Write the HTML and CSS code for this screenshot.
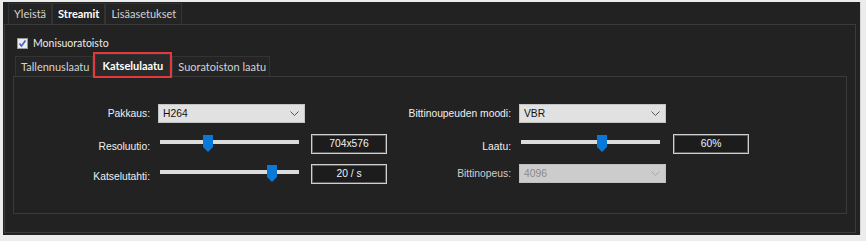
FILE: index.html
```html
<!DOCTYPE html>
<html lang="fi">
<head>
  <meta charset="UTF-8" />
  <title>Streamit</title>
  <link rel="stylesheet" href="styles.css">
</head>
<body>

  <div class="window">
    <!-- Top tabs -->
    <div class="tabs top-tabs">
      <div class="tab">Yleistä</div>
      <div class="tab active">Streamit</div>
      <div class="tab">Lisäasetukset</div>
    </div>

    <div class="panel">
      <label class="check">
        <svg width="11" height="11" viewBox="0 0 11 11">
          <rect x="0.5" y="0.5" width="10" height="10" fill="#ececec" stroke="#9a9a9a"/>
          <polyline points="2.5,5.5 4.5,8 8.5,2.5" fill="none" stroke="#3d5fd8" stroke-width="1.6"/>
        </svg>
        Monisuoratoisto
      </label>

      <!-- Sub tabs -->
      <div class="tabs sub-tabs">
        <div class="tab">Tallennuslaatu</div>
        <div class="tab active marked">Katselulaatu</div>
        <div class="tab">Suoratoiston laatu</div>
      </div>

      <div class="subpanel">
        <div class="form-grid">
          <div class="label">Pakkaus:</div>
          <div class="select">
            <span>H264</span>
            <svg class="chevron" width="9" height="5" viewBox="0 0 9 5"><polyline points="0.5,0.5 4.5,4.5 8.5,0.5" fill="none" stroke="#555" /></svg>
          </div>
          <div></div>
          <div class="label">Bittinoupeuden moodi:</div>
          <div class="select">
            <span>VBR</span>
            <svg class="chevron" width="9" height="5" viewBox="0 0 9 5"><polyline points="0.5,0.5 4.5,4.5 8.5,0.5" fill="none" stroke="#555" /></svg>
          </div>
          <div></div>

          <div class="label low">Resoluutio:</div>
          <div class="slider">
            <div class="track"></div>
            <svg class="thumb" style="left: 43px" width="10" height="17" viewBox="0 0 10 17"><polygon points="0,0 10,0 10,12 5,17 0,12" fill="#0a78d6"/></svg>
          </div>
          <div class="value">704x576</div>
          <div class="label low">Laatu:</div>
          <div class="slider">
            <div class="track"></div>
            <svg class="thumb" style="left: 76px" width="10" height="17" viewBox="0 0 10 17"><polygon points="0,0 10,0 10,12 5,17 0,12" fill="#0a78d6"/></svg>
          </div>
          <div class="value">60%</div>

          <div class="label low">Katselutahti:</div>
          <div class="slider">
            <div class="track"></div>
            <svg class="thumb" style="left: 107px" width="10" height="17" viewBox="0 0 10 17"><polygon points="0,0 10,0 10,12 5,17 0,12" fill="#0a78d6"/></svg>
          </div>
          <div class="value">20 / s</div>
          <div class="label dim">Bittinopeus:</div>
          <div class="select disabled">
            <span>4096</span>
            <svg class="chevron" width="9" height="5" viewBox="0 0 9 5"><polyline points="0.5,0.5 4.5,4.5 8.5,0.5" fill="none" stroke="#a8a8a8" /></svg>
          </div>
          <div></div>
        </div>
      </div>
    </div>
  </div>

</body>
</html>
```

FILE: styles.css
```css
body {
  margin: 0;
  background: #ececec;
  font-family: Lato, "Noto Sans", sans-serif;
  font-size: 11px;
  color: #e6e6e6;
}

.window {
  margin: 2px 0 0 3px;
  width: 858px;
  height: 233px;
  background: #222222;
  border-right: 1px solid #d8d8d8;
  box-sizing: border-box;
}

.tabs {
  display: flex;
}

.top-tabs {
  height: 22px;
  padding-left: 5px;
  align-items: flex-end;
}

.tab {
  height: 20px;
  line-height: 20px;
  padding: 0 5px;
  border: 1px solid #333;
  border-bottom: none;
  background: #242424;
  color: #d4d4d4;
  white-space: nowrap;
}

.tab.active {
  font-weight: bold;
  color: #ffffff;
  background: #222;
}

.panel {
  margin-left: 1px;
  width: 852px;
  height: 209px;
  box-sizing: border-box;
  border: 1px solid #3a3a3a;
  padding: 10px 8px 0 8px;
}

.check {
  display: flex;
  align-items: center;
  gap: 5px;
  height: 16px;
  padding-left: 4px;
  color: #ececec;
  font-size: 10.5px;
}

.sub-tabs {
  margin-top: 5px;
  height: 20px;
  padding-left: 2px;
  align-items: flex-end;
}

.sub-tabs .tab {
  height: 19px;
  line-height: 19px;
  padding: 0 3px 0 5px;
}

.sub-tabs .tab.marked {
  height: 21px;
  line-height: 21px;
  margin: 0 2px;
  padding: 0 6px;
  background: #2a2a2a;
  outline: 2px solid #e3393c;
  outline-offset: 0;
}

.subpanel {
  height: 138px;
  box-sizing: border-box;
  border: 1px solid #3a3a3a;
  padding-top: 27px;
}

.form-grid {
  display: grid;
  grid-template-columns: 144px 153px 76px 132px 154px 76px;
  grid-template-rows: 20px 20px 20px;
  row-gap: 10px;
  font-family: "Liberation Sans", Arial, sans-serif;
  font-size: 10.3px;
}

.label {
  text-align: right;
  padding-right: 8px;
  line-height: 20px;
  color: #f0f0f0;
}

.label.low {
  padding-top: 3px;
}

.label.dim {
  color: #cfcfcf;
}

.select {
  width: 147px;
  height: 19px;
  box-sizing: border-box;
  display: flex;
  align-items: center;
  justify-content: space-between;
  padding: 0 5px 0 4px;
  background: #e1e1e1;
  border: 1px solid #c4c4c4;
  color: #111;
}

.select.disabled {
  background: #cccccc;
  border-color: #c0c0c0;
  color: #8a8a8a;
}

.slider {
  position: relative;
  width: 139px;
  margin-left: 2px;
}

.track {
  margin-top: 6px;
  height: 4px;
  background: #dcdcdc;
}

.thumb {
  position: absolute;
  top: 1px;
}

.value {
  height: 20px;
  box-sizing: border-box;
  border: 1px solid #cfcfcf;
  box-shadow: inset 0 0 0 1px #5c5c5c;
  background: #1c1c1c;
  color: #f2f2f2;
  text-align: center;
  line-height: 18px;
}
```
